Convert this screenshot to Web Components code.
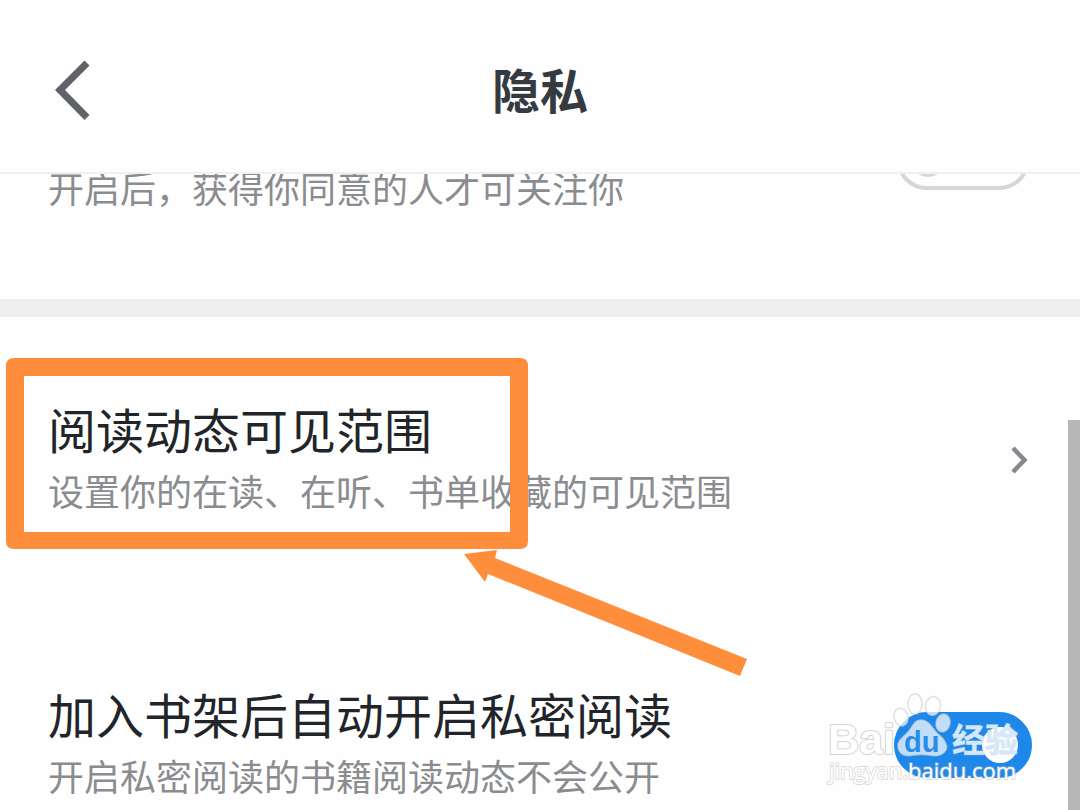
<!DOCTYPE html>
<html lang="zh-CN">
<head>
<meta charset="utf-8">
<meta name="viewport" content="width=device-width, initial-scale=1">
<title>隐私</title>
<style>
  body { margin: 0; background: #fefefe; font-family: "Noto Sans CJK SC", sans-serif; }
</style>
</head>
<body>
<privacy-page>
  <page-header slot="header">隐私</page-header>
  <setting-row kind="toggle" name="approve" label="关注审核">
    <span slot="desc">开启后，获得你同意的人才可关注你</span>
  </setting-row>
  <section-band></section-band>
  <setting-row kind="link">
    <span slot="title">阅读动态可见范围</span>
    <span slot="desc">设置你的在读、在听、书单收藏的可见范围</span>
  </setting-row>
  <setting-row kind="toggle" name="private" checked>
    <span slot="title">加入书架后自动开启私密阅读</span>
    <span slot="desc">开启私密阅读的书籍阅读动态不会公开</span>
  </setting-row>
  <callout-mark slot="overlay"></callout-mark>
  <site-watermark slot="overlay"></site-watermark>
</privacy-page>

<script>
class BaseElement extends HTMLElement {
  render(html) {
    this.attachShadow({ mode: "open" }).innerHTML = html;
  }
}

customElements.define("privacy-page", class extends BaseElement {
  connectedCallback() {
    this.render(`
      <style>
        :host { display: flex; flex-direction: column; height: 100vh; position: relative; overflow: hidden; }
        main { flex: 1; min-height: 0; overflow: hidden; }
        /* the list is shown scrolled, with its first row partly under the header */
        .list { margin-top: -160px; }
        .thumb { position: absolute; right: 0; top: 420px; bottom: 0; width: 12px; background: #b7b7b7; }
      </style>
      <slot name="header"></slot>
      <main><div class="list"><slot></slot></div></main>
      <div class="thumb"></div>
      <slot name="overlay"></slot>`);
  }
});

customElements.define("page-header", class extends BaseElement {
  connectedCallback() {
    this.render(`
      <style>
        :host { display: block; background: #fefefe; border-bottom: 2px solid #f0f0f0; }
        header { display: grid; grid-template-columns: 1fr auto 1fr; align-items: center; padding: 58px 48px 54px; }
        button { justify-self: start; display: block; border: 0; padding: 0; background: none; }
        svg { display: block; overflow: visible; }
        h1 { margin: 0; font-size: 48px; line-height: 60px; font-weight: 700; color: #343a40; }
      </style>
      <header>
        <button type="button" aria-label="返回">
          <svg width="48" height="60" viewBox="0 0 48 60"><path d="M36.500 2.500 L41.500 7.500 L17 32 L41.500 57 L36.500 62 L7 32 Z" fill="#5f6368"/></svg>
        </button>
        <h1><slot></slot></h1>
      </header>`);
  }
});

customElements.define("section-band", class extends BaseElement {
  connectedCallback() {
    this.render(`<style>:host { display: block; height: 18px; background: #edeef0; }</style>`);
  }
});

customElements.define("setting-row", class extends BaseElement {
  connectedCallback() {
    const isLink = this.getAttribute("kind") === "link";
    const label = this.getAttribute("label");
    const control = isLink
      ? `<svg width="24" height="32" viewBox="0 0 24 32"><path d="M5 4 L16.500 16 L5 28" fill="none" stroke="#85898f" stroke-width="4.500"/></svg>`
      : `<input type="checkbox" id="box" role="switch" ${label ? `aria-label="${label}"` : ""} ${this.hasAttribute("checked") ? "checked" : ""}>`;
    const open = isLink ? `<a class="row" href="#scope">` : `<label class="row" for="box">`;
    const close = isLink ? "</a>" : "</label>";
    this.render(`
      <style>
        :host { display: block; }
        .row { display: flex; align-items: center; justify-content: space-between; gap: 24px;
               padding: 80px 48px 81px; color: inherit; text-decoration: none; }
        .title { min-height: 62px; font-size: 48px; line-height: 62px; color: #212529; }
        .desc { font-size: 36px; line-height: 62px; color: #8a8c90; }
        .text { white-space: nowrap; }
        svg, input { flex: none; margin: 2px 0 0; }
        input { appearance: none; box-sizing: border-box; width: 138px; height: 66px; border-radius: 33px;
                border: 4px solid #d6d6d6; background: #fefefe; display: flex; align-items: center;
                padding: 0 10px; }
        input:not(:checked) { width: 134px; height: 62px; margin: 6px 2px 0 0; }
        input::before { content: ""; box-sizing: border-box; width: 36px; height: 36px; border-radius: 50%;
                        border: 3px solid #d6d6d6; background: #fefefe; }
        input:checked { border-color: #1e88ea; background: #1e88ea; justify-content: flex-end; }
        input:checked::before { border-color: #fefefe; }
      </style>
      ${open}
        <div class="text">
          <div class="title"><slot name="title"></slot></div>
          <div class="desc"><slot name="desc"></slot></div>
        </div>
        ${control}
      ${close}`);
  }
});

customElements.define("callout-mark", class extends BaseElement {
  connectedCallback() {
    this.render(`
      <style>
        :host { position: absolute; left: 6px; top: 357px; pointer-events: none; }
        svg { display: block; }
      </style>
      <svg width="744" height="322" viewBox="6 357 744 322" fill="#ff8e3c" aria-hidden="true">
        <path fill-rule="evenodd" d="M14 358 H520 Q528 358 528 366 V541 Q528 549 520 549 H14 Q6 549 6 541 V366 Q6 358 14 358 Z M24 376 V532 H510 V376 Z"/>
        <path d="M464 554 L497 550 L495 558 L747 659 L740 676 L488 574 L485 582 Z"/>
      </svg>`);
  }
});

customElements.define("site-watermark", class extends BaseElement {
  connectedCallback() {
    this.render(`
      <style>
        :host { position: absolute; right: 48px; bottom: 16px; pointer-events: none; }
        svg { display: block; overflow: visible; }
        text { paint-order: stroke; stroke-linejoin: round; }
      </style>
      <svg width="208" height="104" viewBox="824 690 208 104">
        <g fill="#fff" fill-opacity=".72" stroke="#cfcfcf" stroke-opacity=".65" stroke-width="1.500">
          <ellipse cx="901" cy="717" rx="7" ry="9" transform="rotate(-15 901 717)"/>
          <ellipse cx="915" cy="704" rx="7" ry="10"/>
          <ellipse cx="933" cy="706" rx="7.500" ry="9.500" transform="rotate(10 933 706)"/>
          <ellipse cx="943" cy="723" rx="7" ry="9" transform="rotate(12 943 723)"/>
          <path d="M921 720 C930 720 932 729 938 734 C945 739 948 746 946 750 C942 757 934 756 928 755 Q921 754 914 755 C906 757 899 755 898 747 C897 740 904 737 909 731 C913 726 914 720 921 720 Z"/>
        </g>
        <text x="828" y="754" font-family="Liberation Sans, sans-serif" font-weight="700" font-size="43" fill="#fff" stroke="#d4d4d4" stroke-width="2">Bai</text>
        <text x="904" y="752" font-family="Liberation Sans, sans-serif" font-weight="700" font-size="29" fill="#2b8ce8">du</text>
        <text x="952" y="752" font-family="Noto Sans CJK SC, sans-serif" font-weight="700" font-size="33" fill="#d5e8fb" stroke="#cfd9e2" stroke-opacity=".6" stroke-width="1">经验</text>
        <text x="829" y="779" font-family="Open Sans, sans-serif" font-size="22" fill="#fff" stroke="#bdbdbd" stroke-opacity=".5" stroke-width="2">jingyan.baidu.com</text>
      </svg>`);
  }
});
</script>
</body>
</html>
